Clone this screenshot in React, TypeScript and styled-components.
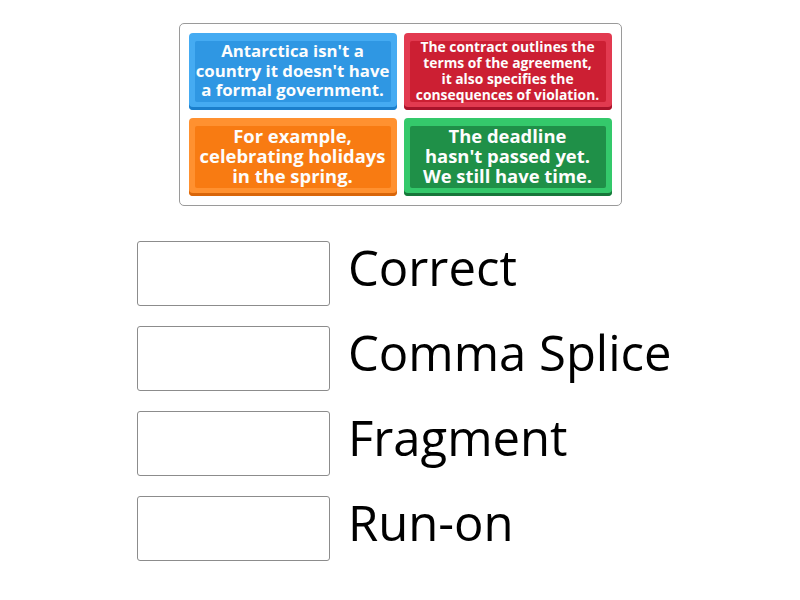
import React from "react";
import styled, { createGlobalStyle } from "styled-components";

const Global = createGlobalStyle`
  html, body { margin: 0; padding: 0; background: #ffffff; }
  body { font-family: "Open Sans", "Noto Sans", sans-serif; }
`;

const Page = styled.div`
  width: 800px;
  height: 600px;
  display: flex;
  flex-direction: column;
  align-items: center;
  padding-top: 23px;
  box-sizing: border-box;
`;

const Panel = styled.div`
  box-sizing: border-box;
  width: 443px;
  border: 1px solid #9a9a9a;
  border-radius: 5px;
  padding: 9px;
  display: grid;
  grid-template-columns: 208px 208px;
  grid-template-rows: 77px 78px;
  column-gap: 7px;
  row-gap: 8px;
  background: #fff;
`;

type Palette = { light: string; face: string; dark: string };

const palettes: Record<string, Palette> = {
  blue: { light: "#45abf2", face: "#2f97e3", dark: "#1b7fcc" },
  red: { light: "#e23a50", face: "#cc1f33", dark: "#a8132a" },
  orange: { light: "#ff9130", face: "#f87b12", dark: "#d9660a" },
  green: { light: "#34c96b", face: "#1f9048", dark: "#17773a" },
};

const Tile = styled.div<{ $p: Palette; $size: number; $lh: number }>`
  position: relative;
  border-radius: 4px;
  background: ${(p) => p.$p.light};
  box-shadow: inset 0 -3px 0 ${(p) => p.$p.dark};
  display: flex;
  flex-direction: column;
  align-items: center;
  justify-content: center;
  text-align: center;
  color: #fdfdfd;
  font-family: "Open Sans", sans-serif;
  font-weight: 700;
  font-size: ${(p) => p.$size}px;
  line-height: ${(p) => p.$lh}px;
  padding: 0 2px 2px;
  box-sizing: border-box;
  overflow: hidden;

  &::before {
    content: "";
    position: absolute;
    top: 8px;
    left: 6px;
    right: 6px;
    bottom: 8px;
    background: ${(p) => p.$p.face};
    border-radius: 2px;
  }
`;

const TileLine = styled.div`
  position: relative;
  z-index: 1;
  white-space: nowrap;
`;

const DropList = styled.div`
  align-self: flex-start;
  margin-top: 35px;
  padding-left: 137px;
  display: flex;
  flex-direction: column;
  gap: 20px;
`;

const DropRow = styled.div`
  display: flex;
  align-items: center;
  gap: 18px;
`;

const DropBox = styled.div`
  width: 193px;
  height: 65px;
  box-sizing: border-box;
  border: 1px solid #8c8c8c;
  border-radius: 3px;
  background: #fff;
`;

const Label = styled.div`
  font-family: "Open Sans", sans-serif;
  font-size: 49px;
  color: #000;
  line-height: 1;
  margin-top: -12px;
`;

const tiles = [
  { c: "blue", size: 16.8, lh: 19.5, t: ["Antarctica isn't a", "country it doesn't have", "a formal government."] },
  {
    c: "red",
    size: 13.85,
    lh: 16,
    t: ["The contract outlines the", "terms of the agreement,", "it also specifies the", "consequences of violation."],
  },
  { c: "orange", size: 18.4, lh: 20, t: ["For example,", "celebrating holidays", "in the spring."] },
  { c: "green", size: 18.4, lh: 20, t: ["The deadline", "hasn't passed yet.", "We still have time."] },
];

const labels = ["Correct", "Comma Splice", "Fragment", "Run-on"];

export default function App() {
  return (
    <>
      <Global />
      <Page>
        <Panel>
          {tiles.map((tile, i) => (
            <Tile key={i} $p={palettes[tile.c]} $size={tile.size} $lh={tile.lh}>
              {tile.t.map((line, j) => (
                <TileLine key={j}>{line}</TileLine>
              ))}
            </Tile>
          ))}
        </Panel>
        <DropList>
          {labels.map((l) => (
            <DropRow key={l}>
              <DropBox />
              <Label>{l}</Label>
            </DropRow>
          ))}
        </DropList>
      </Page>
    </>
  );
}
